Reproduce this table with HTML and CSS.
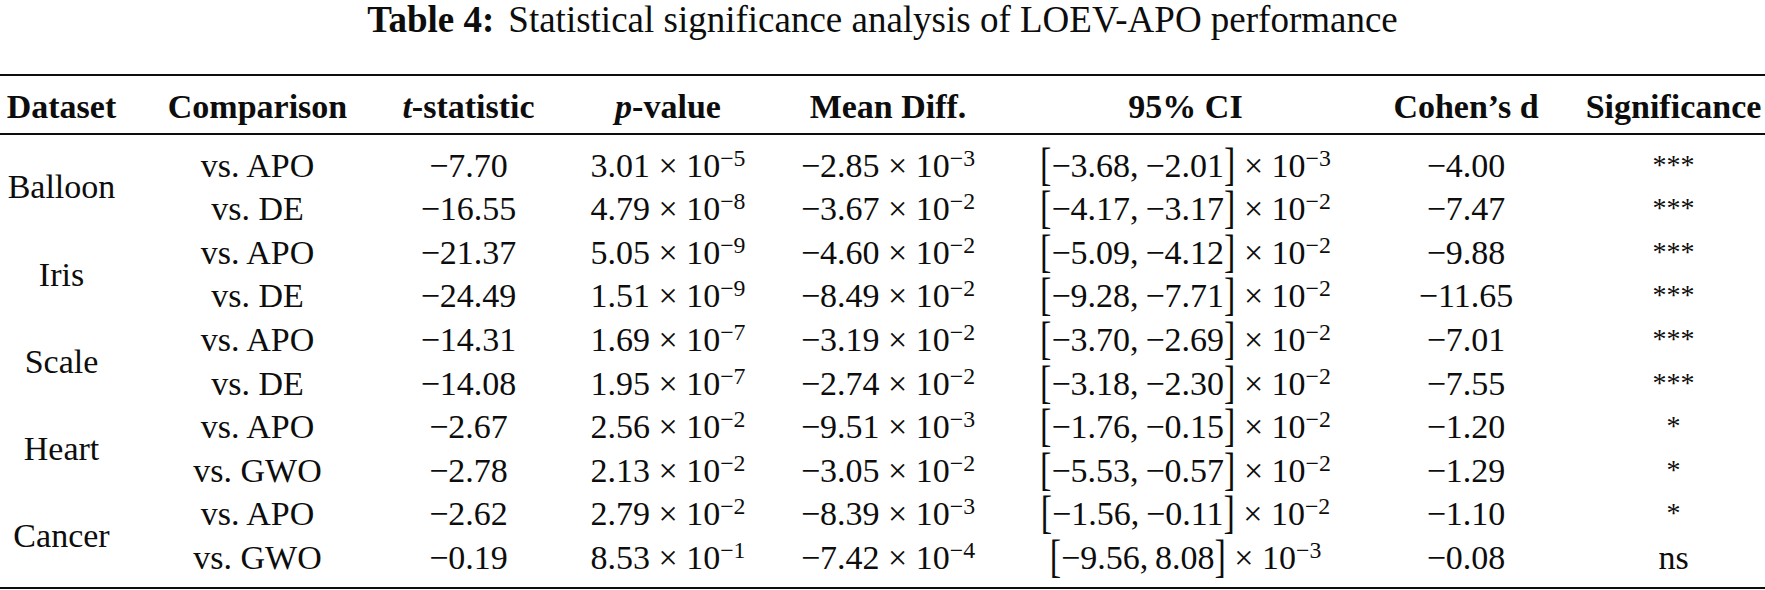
FILE: index.html
```html
<!DOCTYPE html>
<html lang="en">
<head>
<meta charset="utf-8">
<title>Table 4</title>
<link rel="stylesheet" href="styles.css">
</head>
<body>
<p class="caption"><b class="cap-label">Table 4:</b>Statistical significance analysis of LOEV-APO performance</p>
<table class="stats">
  <colgroup>
    <col class="c1"><col class="c2"><col class="c3"><col class="c4"><col class="c5"><col class="c6"><col class="c7"><col class="c8">
  </colgroup>
  <thead>
    <tr>
      <th class="first">Dataset</th>
      <th>Comparison</th>
      <th><i>t</i>-statistic</th>
      <th><i>p</i>-value</th>
      <th>Mean Diff.</th>
      <th>95% CI</th>
      <th>Cohen’s d</th>
      <th class="last">Significance</th>
    </tr>
  </thead>
  <tbody>
    <tr>
      <td class="first ds" rowspan="2">Balloon</td>
      <td>vs. APO</td><td>−7.70</td>
      <td>3.01 × 10<sup>−5</sup></td>
      <td>−2.85 × 10<sup>−3</sup></td>
      <td><span class="br">[</span>−3.68,&thinsp;−2.01<span class="br">]</span> × 10<sup>−3</sup></td>
      <td>−4.00</td><td class="last"><span class="star">***</span></td>
    </tr>
    <tr>
      <td>vs. DE</td><td>−16.55</td>
      <td>4.79 × 10<sup>−8</sup></td>
      <td>−3.67 × 10<sup>−2</sup></td>
      <td><span class="br">[</span>−4.17,&thinsp;−3.17<span class="br">]</span> × 10<sup>−2</sup></td>
      <td>−7.47</td><td class="last"><span class="star">***</span></td>
    </tr>
    <tr>
      <td class="first ds" rowspan="2">Iris</td>
      <td>vs. APO</td><td>−21.37</td>
      <td>5.05 × 10<sup>−9</sup></td>
      <td>−4.60 × 10<sup>−2</sup></td>
      <td><span class="br">[</span>−5.09,&thinsp;−4.12<span class="br">]</span> × 10<sup>−2</sup></td>
      <td>−9.88</td><td class="last"><span class="star">***</span></td>
    </tr>
    <tr>
      <td>vs. DE</td><td>−24.49</td>
      <td>1.51 × 10<sup>−9</sup></td>
      <td>−8.49 × 10<sup>−2</sup></td>
      <td><span class="br">[</span>−9.28,&thinsp;−7.71<span class="br">]</span> × 10<sup>−2</sup></td>
      <td>−11.65</td><td class="last"><span class="star">***</span></td>
    </tr>
    <tr>
      <td class="first ds" rowspan="2">Scale</td>
      <td>vs. APO</td><td>−14.31</td>
      <td>1.69 × 10<sup>−7</sup></td>
      <td>−3.19 × 10<sup>−2</sup></td>
      <td><span class="br">[</span>−3.70,&thinsp;−2.69<span class="br">]</span> × 10<sup>−2</sup></td>
      <td>−7.01</td><td class="last"><span class="star">***</span></td>
    </tr>
    <tr>
      <td>vs. DE</td><td>−14.08</td>
      <td>1.95 × 10<sup>−7</sup></td>
      <td>−2.74 × 10<sup>−2</sup></td>
      <td><span class="br">[</span>−3.18,&thinsp;−2.30<span class="br">]</span> × 10<sup>−2</sup></td>
      <td>−7.55</td><td class="last"><span class="star">***</span></td>
    </tr>
    <tr>
      <td class="first ds" rowspan="2">Heart</td>
      <td>vs. APO</td><td>−2.67</td>
      <td>2.56 × 10<sup>−2</sup></td>
      <td>−9.51 × 10<sup>−3</sup></td>
      <td><span class="br">[</span>−1.76,&thinsp;−0.15<span class="br">]</span> × 10<sup>−2</sup></td>
      <td>−1.20</td><td class="last"><span class="star">*</span></td>
    </tr>
    <tr>
      <td>vs. GWO</td><td>−2.78</td>
      <td>2.13 × 10<sup>−2</sup></td>
      <td>−3.05 × 10<sup>−2</sup></td>
      <td><span class="br">[</span>−5.53,&thinsp;−0.57<span class="br">]</span> × 10<sup>−2</sup></td>
      <td>−1.29</td><td class="last"><span class="star">*</span></td>
    </tr>
    <tr>
      <td class="first ds ds-last" rowspan="2">Cancer</td>
      <td>vs. APO</td><td>−2.62</td>
      <td>2.79 × 10<sup>−2</sup></td>
      <td>−8.39 × 10<sup>−3</sup></td>
      <td><span class="br">[</span>−1.56,&thinsp;−0.11<span class="br">]</span> × 10<sup>−2</sup></td>
      <td>−1.10</td><td class="last"><span class="star">*</span></td>
    </tr>
    <tr>
      <td>vs. GWO</td><td>−0.19</td>
      <td>8.53 × 10<sup>−1</sup></td>
      <td>−7.42 × 10<sup>−4</sup></td>
      <td><span class="br">[</span>−9.56,&thinsp;8.08<span class="br">]</span> × 10<sup>−3</sup></td>
      <td>−0.08</td><td class="last">ns</td>
    </tr>
  </tbody>
</table>
</body>
</html>
```
FILE: styles.css
```css
html, body {
  margin: 0;
  padding: 0;
  background: #ffffff;
}
body {
  font-family: "Liberation Serif", "Times New Roman", serif;
  color: #0d0d0d;
  width: 1765px;
  height: 590px;
  overflow: hidden;
}
.caption {
  margin: 0 0 34px;
  font-size: 37px;
  line-height: 40px;
  text-align: center;
}
.cap-label {
  margin-right: 14px;
}
.stats {
  width: 1765px;
  border-collapse: collapse;
  table-layout: fixed;
  font-size: 34px;
  border-bottom: 2px solid #0d0d0d;
}
.c1 { width: 143px; }
.c2 { width: 229px; }
.c3 { width: 193px; }
.c4 { width: 206px; }
.c5 { width: 234px; }
.c6 { width: 361px; }
.c7 { width: 200px; }
.c8 { width: 199px; }

.stats th {
  font-weight: bold;
  text-align: center;
  line-height: 43.6px;
  padding: 9px 0 4px;
  border-top: 2px solid #0d0d0d;
  border-bottom: 2px solid #0d0d0d;
  white-space: nowrap;
}
.stats td {
  text-align: center;
  line-height: 43.6px;
  padding: 0;
  white-space: nowrap;
  vertical-align: middle;
}
.stats tbody tr:first-child td {
  padding-top: 9px;
}
.stats tbody tr:last-child td {
  padding-bottom: 7px;
}
.stats .first {
  padding-right: 20px;
}
.stats .last {
  padding-left: 16px;
}
.stats .ds-last {
  padding-bottom: 7px;
}
sup {
  font-size: 0.7em;
  vertical-align: 0.45em;
  line-height: 0;
}
.br {
  display: inline-block;
  line-height: 34px;
  transform: scaleY(1.36);
  transform-origin: 50% 19.5px;
}
.star {
  font-size: 28px;
  display: inline-block;
  line-height: 0;
  vertical-align: 3px;
}
```
